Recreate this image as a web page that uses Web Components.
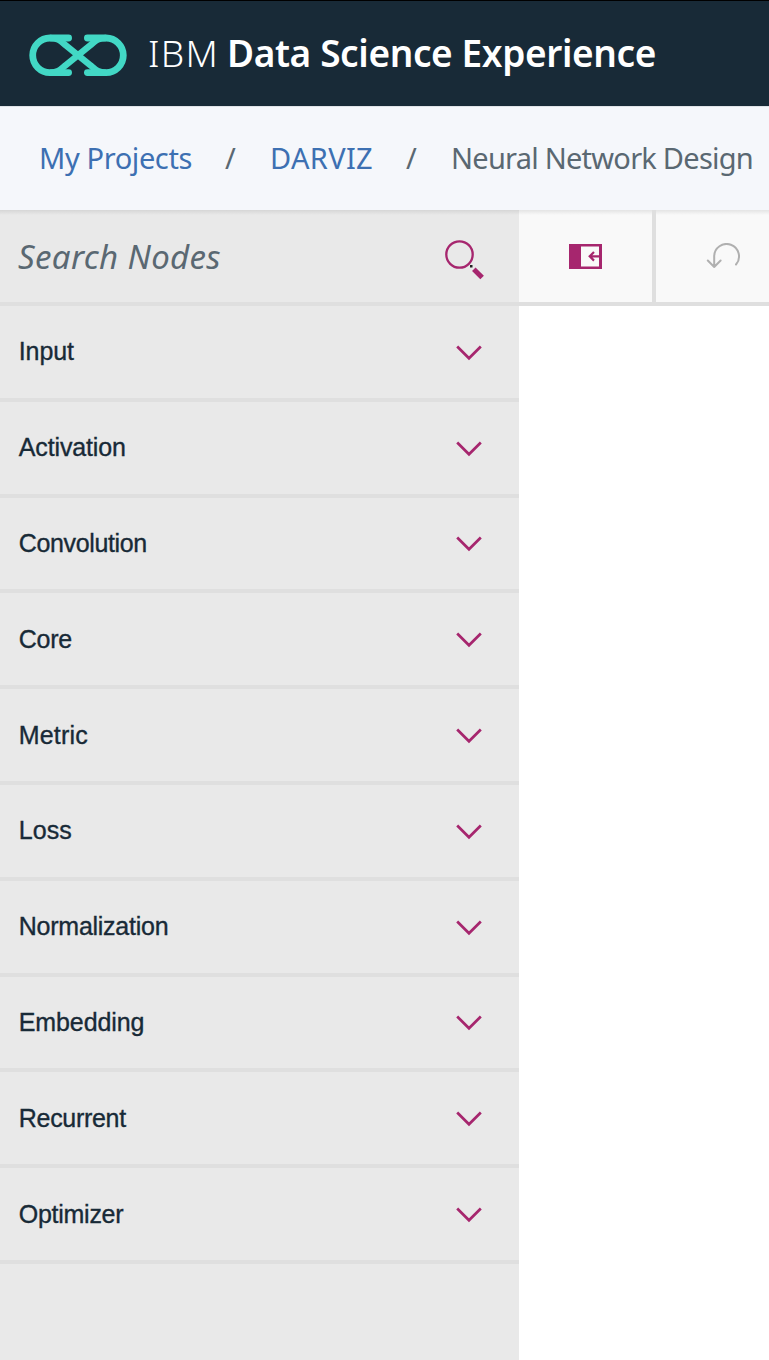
<!DOCTYPE html>
<html lang="en">
<head>
<meta charset="utf-8">
<title>IBM Data Science Experience</title>
<style>
html,body{margin:0;background:#fff}
body{width:769px;height:1360px;overflow:hidden;font-family:"Noto Sans","Open Sans",sans-serif}
</style>
</head>
<body>
<dsx-app></dsx-app>
<script>
const define = (name, html, setup) => customElements.define(name, class extends HTMLElement {
  connectedCallback() {
    if (this.shadowRoot) return;
    this.attachShadow({mode: 'open'}).innerHTML = html;
    if (setup) setup(this);
  }
});

// A run of text tracked so that its advance equals the "width" attribute.
define('fit-text', `<style>:host{display:block;white-space:nowrap;flex:none;overflow:visible}span{display:inline-block}</style><span><slot></slot></span>`, el => {
  const span = el.shadowRoot.querySelector('span');
  const width = +el.getAttribute('width');
  el.style.width = width + 'px';
  const spacing = (width - span.getBoundingClientRect().width) / el.textContent.length;
  span.style.letterSpacing = spacing.toFixed(3) + 'px';
});

define('dsx-header', `<style>
:host{display:flex;align-items:center;box-sizing:border-box;height:106px;border-top:1px solid #000;background:#182a37;color:#fff;font-size:37px;line-height:50px;padding:0 0 1px 28px}
svg{flex:none;display:block;margin:3px 20px 0 0}
.light{font-weight:300;margin-right:8px}.bold{font-weight:600}
</style>
<svg width="100" height="44" viewBox="0 0 100 44" fill="none" stroke="#42d8c5" stroke-width="6.8" stroke-linecap="round" stroke-linejoin="round">
<path d="M40.600 5H22A17.300 17.300 0 0 0 22 39.600H40.600M59.400 5H78A17.300 17.300 0 0 1 78 39.600H59.400"/>
<path stroke-linecap="butt" stroke-width="6.400" d="M22 5C31 5 33.500 9 38 12.600L62 32C66.500 35.600 69 39.600 78 39.600M78 5C69 5 66.500 9 62 12.600L38 32C33.500 35.600 31 39.600 22 39.600"/>
</svg>
<fit-text class="light" width="71">IBM</fit-text><fit-text class="bold" width="429">Data Science Experience</fit-text>`);

define('dsx-breadcrumb', `<style>
:host{display:flex;align-items:center;box-sizing:border-box;height:104px;background:#f5f7fb;border-top:1px solid #dfe3e7;color:#5a6872;font-size:29px;line-height:40px;padding:0 0 2px 39px}
.link{color:#3d70b2}
.sep{margin:0 34px 0 33px}.sep2{margin:0 34px 0 33px}
</style>
<fit-text class="link" width="153">My Projects</fit-text><fit-text class="sep" width="11">/</fit-text><fit-text class="link" width="103">DARVIZ</fit-text><fit-text class="sep2" width="11">/</fit-text><fit-text width="302">Neural Network Design</fit-text>`);

define('dsx-search', `<style>
:host{display:flex;align-items:center;justify-content:space-between;height:92px;border-bottom:4px solid #dfdfdf;padding:0 33px 0 18px;color:#5a6872;font-size:33px;line-height:44px;font-style:italic;background:linear-gradient(#d6d6d6,#e9e9e9 5px)}
fit-text{margin-top:1px}
svg{display:block;margin-top:8px}
</style>
<fit-text width="203">Search Nodes</fit-text>
<svg width="41" height="42" viewBox="0 0 41 42"><circle cx="14.500" cy="15.500" r="13.200" fill="none" stroke="#a6266e" stroke-width="2.300"/><path d="M25 26h2.500v2.500H25z" fill="#222"/><path d="M28.800 30.300l8.300 8.300" stroke="#a6266e" stroke-width="5"/></svg>`);

define('dsx-category', `<style>
:host{display:flex;align-items:center;justify-content:space-between;box-sizing:border-box;height:95.8px;border-bottom:4px solid #dfdfdf;padding:0 37px 0 18.800px;color:#182a37;font:25px/30px "Liberation Sans",Arial,sans-serif}
fit-text{-webkit-text-stroke:.35px #182a37;margin-top:-1px}
svg{display:block;margin-top:2px}
</style><fit-text></fit-text>
<svg width="26" height="16" viewBox="0 0 26 16" fill="none" stroke="#a6266e" stroke-width="2.700"><path d="M1.200 1.500L13 13.300 24.800 1.500"/></svg>`, el => {
  const t = el.shadowRoot.querySelector('fit-text');
  const label = document.createElement('fit-text');
  label.setAttribute('width', el.getAttribute('width'));
  label.textContent = el.getAttribute('label');
  t.replaceWith(label);
});

define('dsx-palette', `<style>:host{display:block;width:519px;height:1150px;flex:none;background:#e9e9e9}</style><dsx-search></dsx-search><slot></slot>`);

define('dsx-toolbar', `<style>
:host{display:flex;height:92px;border-bottom:4px solid #dfdfdf;background:linear-gradient(#e4e4e4,#f9f9f9 5px)}
.cell{display:flex;align-items:center;box-sizing:border-box;flex:none}
.first{width:137px;border-right:4px solid #dfdfdf;padding-left:50px}
.second{padding-left:50px}
svg{display:block}
</style>
<div class="cell first"><svg width="33" height="25" viewBox="0 0 33 25"><path fill="#a6266e" d="M0 0h33v25H0z"/><path fill="#f9f9f9" d="M12 2.500h18v20H12z"/><path fill="none" stroke="#a6266e" stroke-width="2.200" d="M31 12.300H20.500M25 8l-4.300 4.300L25 16.600"/></svg></div>
<div class="cell second"><svg width="35" height="26" viewBox="0 0 35 26" fill="none" stroke="#b0b0b0" stroke-width="2" stroke-linecap="round" stroke-linejoin="round"><path d="M8.200 24V13.500A12.400 12.400 0 1 1 30 21.500M1.800 17.500L8.200 24l6.400-6.500"/></svg></div>`);

define('dsx-app', `<style>
:host{display:block;width:769px;height:1360px;overflow:hidden}
main{display:flex;height:1150px}
dsx-toolbar{flex:1;min-width:0;overflow:hidden}
</style>
<dsx-header></dsx-header><dsx-breadcrumb></dsx-breadcrumb>
<main><dsx-palette>
<dsx-category label="Input" width="55"></dsx-category>
<dsx-category label="Activation" width="107"></dsx-category>
<dsx-category label="Convolution" width="128"></dsx-category>
<dsx-category label="Core" width="53"></dsx-category>
<dsx-category label="Metric" width="69"></dsx-category>
<dsx-category label="Loss" width="53"></dsx-category>
<dsx-category label="Normalization" width="149.500"></dsx-category>
<dsx-category label="Embedding" width="125.500"></dsx-category>
<dsx-category label="Recurrent" width="107"></dsx-category>
<dsx-category label="Optimizer" width="104.500"></dsx-category>
</dsx-palette><dsx-toolbar></dsx-toolbar></main>`);
</script>
</body>
</html>
